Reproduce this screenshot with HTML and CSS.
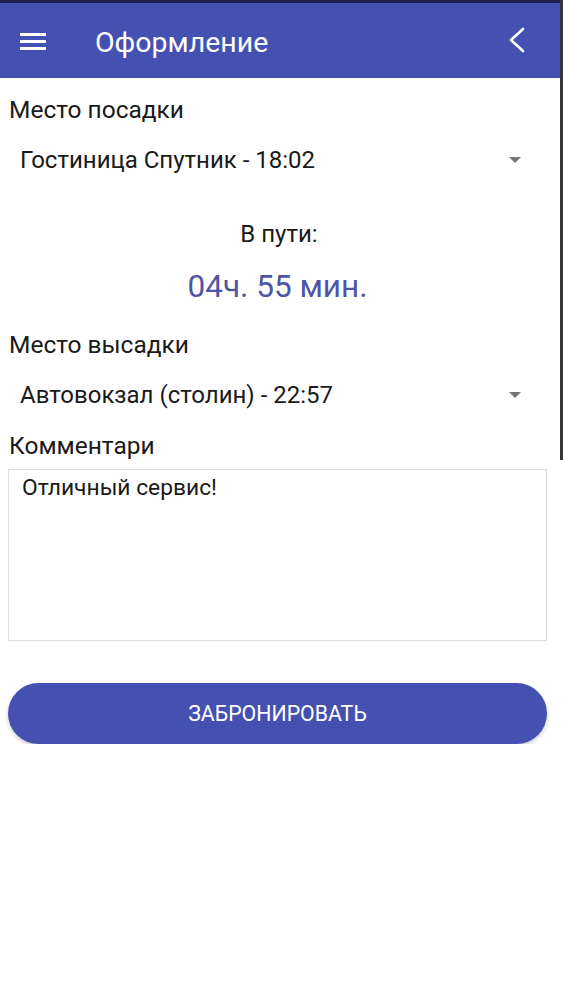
FILE: index.html
```html
<!DOCTYPE html>
<html lang="ru">
<head>
    <meta charset="UTF-8" />
    <meta name="viewport" content="width=device-width, initial-scale=1.0" />
    <title>Оформление</title>
    <link rel="stylesheet" href="styles.css">
</head>
<body>
    <div class="statusbar"></div>
    <div class="header">
        <button class="menu-btn" aria-label="menu">
            <svg width="26" height="18" viewBox="0 0 26 18">
                <rect x="0" y="0" width="26" height="3" fill="#fff"/>
                <rect x="0" y="7" width="26" height="3" fill="#fff"/>
                <rect x="0" y="14" width="26" height="3" fill="#fff"/>
            </svg>
        </button>
        <h1 class="title">Оформление</h1>
        <button class="back-btn" aria-label="back">
            <svg width="18" height="26" viewBox="0 0 18 26">
                <path d="M15 2 L3 13 L15 24" fill="none" stroke="#fff" stroke-width="2.6" stroke-linecap="round" stroke-linejoin="round"/>
            </svg>
        </button>
    </div>
    <div class="scroll-thumb"></div>

    <div class="form">
        <div class="label first">Место посадки</div>
        <div class="select">
            <span>Гостиница Спутник - 18:02</span>
            <span class="caret"></span>
        </div>

        <div class="trip-label">В пути:</div>
        <div class="trip-time">04ч. 55 мин.</div>

        <div class="label second">Место высадки</div>
        <div class="select">
            <span>Автовокзал (столин) - 22:57</span>
            <span class="caret"></span>
        </div>

        <div class="label third">Комментари</div>
        <div class="comment">Отличный сервис!</div>

        <button class="book-btn">ЗАБРОНИРОВАТЬ</button>
    </div>
</body>
</html>
```

FILE: styles.css
```css
html, body {
    margin: 0;
    padding: 0;
    background: #fff;
    font-family: Roboto, "Noto Sans", sans-serif;
    color: #1a1a1a;
}
.statusbar {
    height: 3px;
    background: #1d2050;
}
.header {
    height: 75px;
    background: #4451b1;
    display: flex;
    align-items: center;
    padding: 0 20px;
    color: #fff;
}
.header button {
    background: none;
    border: none;
    padding: 0;
    display: flex;
    align-items: center;
}
.menu-btn {
    margin-top: 2px;
}
.title {
    margin: 3px 0 0 49px;
    font-size: 28.5px;
    font-weight: 400;
    flex: 1;
}
.back-btn {
    margin-right: 17px;
    margin-top: -2px;
}
.scroll-thumb {
    position: absolute;
    top: 0;
    right: 0;
    width: 3px;
    height: 460px;
    background: #35363d;
}
.form {
    display: flex;
    flex-direction: column;
    padding: 17px 16px 0 8px;
}
.label {
    font-size: 24.5px;
    line-height: 30px;
    padding-left: 1px;
}
.second {
    margin-top: 23px;
}
.third {
    margin-top: 11px;
}
.select {
    height: 50px;
    margin-top: 10px;
    display: flex;
    align-items: center;
    justify-content: space-between;
    padding: 0 26px 0 12px;
    font-size: 24px;
}
.caret {
    width: 0;
    height: 0;
    border-left: 6px solid transparent;
    border-right: 6px solid transparent;
    border-top: 6px solid #757575;
}
.trip-label {
    margin-top: 34px;
    text-align: center;
    font-size: 24px;
    line-height: 30px;
    padding-left: 3px;
}
.trip-time {
    margin-top: 18px;
    text-align: center;
    font-size: 31.5px;
    line-height: 40px;
    color: #4f55a5;
}
.comment {
    margin-top: 8px;
    height: 162px;
    border: 1px solid #dcdcdc;
    padding: 4px 13px;
    font-size: 22.8px;
    line-height: 28px;
}
.book-btn {
    margin-top: 42px;
    height: 61px;
    border: none;
    border-radius: 31px;
    background: #4451b1;
    color: #fff;
    font-family: Roboto, sans-serif;
    font-size: 21.3px;
    box-shadow: 0 2px 4px rgba(0, 0, 0, 0.2);
}
```
